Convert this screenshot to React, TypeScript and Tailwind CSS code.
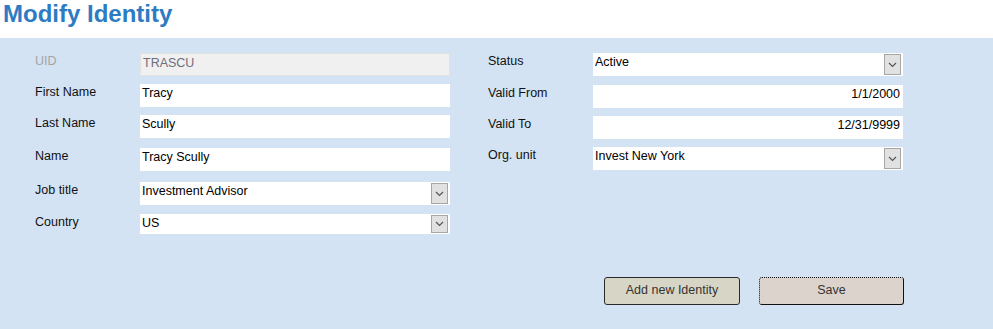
import React from 'react';

const FONT = { fontFamily: '"Liberation Sans", Arial, sans-serif' };

function Chevron() {
  return (
    <svg width="9" height="6" viewBox="0 0 9 6" className="block">
      <path d="M1 1 L4.5 4.5 L8 1" fill="none" stroke="#555" strokeWidth="1.2" />
    </svg>
  );
}

function Field({
  value,
  select,
  right,
  disabled,
  h = 'h-[23px]',
}: {
  value: string;
  select?: boolean;
  right?: boolean;
  disabled?: boolean;
  h?: string;
}) {
  return (
    <div
      className={`flex ${h} w-[310px] items-start ${
        disabled ? 'bg-[#f0f0f0] border border-[#e2e2e2]' : 'bg-white'
      }`}
    >
      <div
        className={`flex-1 pt-[2px] text-[12.5px] leading-[14px] ${right ? 'text-right pr-[3px]' : 'pl-[2px]'} ${
          disabled ? 'text-[#6e6e7a]' : 'text-black'
        }`}
      >
        {value}
      </div>
      {select && (
        <div className="mr-[2px] flex h-[calc(100%-2px)] w-[17px] items-center justify-center self-center border border-[#a6a6a6] bg-[#e1e1e1]">
          <Chevron />
        </div>
      )}
    </div>
  );
}

function Row({
  label,
  mt,
  muted,
  children,
}: {
  label: string;
  mt: string;
  muted?: boolean;
  children: React.ReactNode;
}) {
  return (
    <div className={`flex items-start ${mt}`}>
      <div className={`w-[105px] pt-[1px] text-[12.5px] leading-[14px] ${muted ? 'text-[#a3a3a3]' : 'text-[#111]'}`}>
        {label}
      </div>
      {children}
    </div>
  );
}

export default function App() {
  return (
    <div className="flex h-[329px] w-[993px] flex-col bg-white" style={FONT}>
      <h1 className="h-[28px] pl-[3px] text-[24px] font-bold leading-[28px] text-[#2e7bc3]">Modify Identity</h1>

      <div className="mt-[10px] flex flex-1 flex-col bg-[#d4e3f4] pt-[15px]">
        <div className="flex">
          {/* Left column */}
          <div className="ml-[35px] flex w-[415px] flex-col">
            <Row label="UID" mt="mt-0" muted>
              <Field value="TRASCU" disabled />
            </Row>
            <Row label="First Name" mt="mt-[8px]">
              <Field value="Tracy" />
            </Row>
            <Row label="Last Name" mt="mt-[8px]">
              <Field value="Scully" />
            </Row>
            <Row label="Name" mt="mt-[10px]">
              <Field value="Tracy Scully" />
            </Row>
            <Row label="Job title" mt="mt-[11px]">
              <Field value="Investment Advisor" select />
            </Row>
            <Row label="Country" mt="mt-[9px]">
              <Field value="US" select h="h-[20px]" />
            </Row>
          </div>

          {/* Right column */}
          <div className="ml-[38px] flex w-[415px] flex-col">
            <Row label="Status" mt="mt-0">
              <Field value="Active" select />
            </Row>
            <Row label="Valid From" mt="mt-[9px]">
              <Field value="1/1/2000" right />
            </Row>
            <Row label="Valid To" mt="mt-[8px]">
              <Field value="12/31/9999" right />
            </Row>
            <Row label="Org. unit" mt="mt-[8px]">
              <Field value="Invest New York" select />
            </Row>
          </div>
        </div>

        <div className="ml-[604px] mt-[43px] flex gap-[19px]">
          <button className="h-[28px] w-[136px] rounded-[3px] border border-[#2a2a2a] bg-[#d7d6c6] pb-[1px] text-[12.5px] text-[#333]">
            Add new Identity
          </button>
          <button className="h-[28px] w-[145px] rounded-[3px] border border-dotted border-[#111] bg-[#dcd3cc] pb-[1px] text-[12.5px] text-[#333] [border-bottom-style:solid] [border-right-style:solid]">
            Save
          </button>
        </div>
      </div>
    </div>
  );
}
